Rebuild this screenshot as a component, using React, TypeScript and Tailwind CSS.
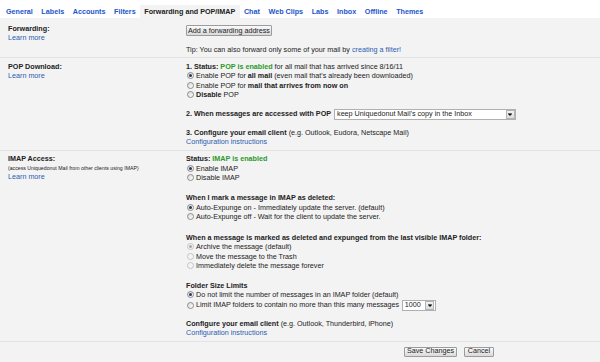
import React from "react";

const Radio = ({ checked = false, disabled = false }: { checked?: boolean; disabled?: boolean }) => (
  <span
    className={
      "ml-[1px] mr-[2px] inline-flex h-[7px] w-[7px] shrink-0 items-center justify-center rounded-full border " +
      (disabled
        ? "border-[#c4c4c4] bg-[#f4f4f4]"
        : "border-[#8c8c8c] bg-gradient-to-br from-[#d8d8d8] to-[#ffffff]")
    }
  >
    {checked && (
      <span
        className={
          "h-[3px] w-[3px] rounded-full " + (disabled ? "bg-[#a8a8a8]" : "bg-[#27385a]")
        }
      />
    )}
  </span>
);

const RadioRow = ({
  checked,
  disabled,
  children,
}: {
  checked?: boolean;
  disabled?: boolean;
  children: React.ReactNode;
}) => (
  <div className="flex h-[9.5px] items-center">
    <Radio checked={checked} disabled={disabled} />
    <span className="whitespace-nowrap">{children}</span>
  </div>
);

const DropArrow = () => (
  <span className="ml-auto flex h-[9px] w-[9px] items-center justify-center border border-[#b4b4b4] bg-gradient-to-b from-[#f2f2f2] to-[#dcdcdc]">
    <svg width="4" height="3" viewBox="0 0 4 3">
      <rect x="0" y="0" width="4" height="0.7" fill="#333" />
      <polygon points="0,1 4,1 2,3" fill="#111" />
    </svg>
  </span>
);

const Select = ({ text, w }: { text: string; w: string }) => (
  <span
    className={
      "flex h-[11px] items-center border border-[#b0b0b0] bg-white pl-[2px] pr-[0.5px] " + w
    }
  >
    <span className="whitespace-nowrap text-[#222]">{text}</span>
    <DropArrow />
  </span>
);

const Btn = ({ children, w, h }: { children: React.ReactNode; w: string; h: string }) => (
  <span
    className={
      "flex items-center justify-center rounded-[1px] border border-[#9c9c9c] bg-gradient-to-b from-[#fafafa] to-[#dadada] text-[#222] whitespace-nowrap " +
      w +
      " " +
      h
    }
  >
    {children}
  </span>
);

const tabs = [
  "General",
  "Labels",
  "Accounts",
  "Filters",
  "Forwarding and POP/IMAP",
  "Chat",
  "Web Clips",
  "Labs",
  "Inbox",
  "Offline",
  "Themes",
];

const Link = ({ children }: { children: React.ReactNode }) => (
  <span className="text-[#2a5db0]">{children}</span>
);

export default function App() {
  return (
    <div
      className="h-[362px] w-[600px] overflow-hidden bg-[#f3f3f3] text-[7.2px] text-[#222]"
      style={{ fontFamily: '"Liberation Sans", Arial, sans-serif' }}
    >
      {/* Tabs */}
      <div className="flex h-[18px] items-end bg-white pl-[1.7px]">
        {tabs.map((t) => (
          <span
            key={t}
            className={
              "h-[13px] whitespace-nowrap px-[4.3px] pt-[1px] font-bold leading-[12px] " +
              (t === "Forwarding and POP/IMAP" ? "bg-[#f3f3f3] text-[#222]" : "text-[#2255cc]")
            }
          >
            {t}
          </span>
        ))}
      </div>

      {/* Forwarding */}
      <div className="flex border-b border-[#e3e3e3] pb-[2px] pt-[6px]">
        <div className="w-[186px] shrink-0 pl-[8px] leading-[9px]">
          <div className="font-bold">Forwarding:</div>
          <Link>Learn more</Link>
        </div>
        <div className="flex flex-col items-start pt-[1px] leading-[9.5px]">
          <Btn w="w-[86px]" h="h-[11px]">Add a forwarding address</Btn>
          <div className="mt-[9px] whitespace-nowrap">
            Tip: You can also forward only some of your mail by <Link>creating a filter!</Link>
          </div>
        </div>
      </div>

      {/* POP */}
      <div className="flex border-b border-[#e3e3e3] pb-[3.5px] pt-[4px]">
        <div className="w-[186px] shrink-0 pl-[8px] leading-[9px]">
          <div className="font-bold">POP Download:</div>
          <Link>Learn more</Link>
        </div>
        <div className="leading-[9.5px]">
          <div className="whitespace-nowrap">
            <b>1. Status: </b>
            <b className="text-[#2a9a2a]">POP is enabled</b> for all mail that has arrived since 8/16/11
          </div>
          <RadioRow checked>
            Enable POP for <b>all mail</b> (even mail that's already been downloaded)
          </RadioRow>
          <RadioRow>
            Enable POP for <b>mail that arrives from now on</b>
          </RadioRow>
          <RadioRow>
            <b>Disable</b> POP
          </RadioRow>
          <div className="mt-[9px] flex h-[11px] items-center">
            <b className="mr-[3px] whitespace-nowrap">2. When messages are accessed with POP</b>
            <Select text="keep Uniquedonut Mail's copy in the Inbox" w="w-[182px]" />
          </div>
          <div className="mt-[9.5px] whitespace-nowrap leading-[8.5px]">
            <b>3. Configure your email client</b> (e.g. Outlook, Eudora, Netscape Mail)
          </div>
          <div className="leading-[8.5px]">
            <Link>Configuration instructions</Link>
          </div>
        </div>
      </div>

      {/* IMAP */}
      <div className="flex border-b border-[#e3e3e3] pb-[4px] pt-[3.5px]">
        <div className="w-[186px] shrink-0 pl-[8px]">
          <div className="font-bold leading-[9.5px]">IMAP Access:</div>
          <div className="whitespace-nowrap text-[5.2px] leading-[9px]">
            (access Uniquedonut Mail from other clients using IMAP)
          </div>
          <div className="leading-[8px]">
            <Link>Learn more</Link>
          </div>
        </div>
        <div className="leading-[9.5px]">
          <div className="whitespace-nowrap">
            <b>Status: </b>
            <b className="text-[#2a9a2a]">IMAP is enabled</b>
          </div>
          <RadioRow checked>Enable IMAP</RadioRow>
          <RadioRow>Disable IMAP</RadioRow>

          <div className="mt-[10.5px] whitespace-nowrap font-bold">
            When I mark a message in IMAP as deleted:
          </div>
          <RadioRow checked>Auto-Expunge on - Immediately update the server. (default)</RadioRow>
          <RadioRow>Auto-Expunge off - Wait for the client to update the server.</RadioRow>

          <div className="mt-[11px] whitespace-nowrap font-bold">
            When a message is marked as deleted and expunged from the last visible IMAP folder:
          </div>
          <RadioRow checked disabled>
            Archive the message (default)
          </RadioRow>
          <RadioRow disabled>Move the message to the Trash</RadioRow>
          <RadioRow disabled>Immediately delete the message forever</RadioRow>

          <div className="mt-[10px] whitespace-nowrap font-bold">Folder Size Limits</div>
          <RadioRow checked>Do not limit the number of messages in an IMAP folder (default)</RadioRow>
          <div className="flex h-[11px] items-center">
            <Radio />
            <span className="mr-[2.5px] whitespace-nowrap">
              Limit IMAP folders to contain no more than this many messages
            </span>
            <Select text="1000" w="w-[34px]" />
          </div>

          <div className="mt-[8.5px] whitespace-nowrap">
            <b>Configure your email client</b> (e.g. Outlook, Thunderbird, iPhone)
          </div>
          <div className="leading-[8.5px]">
            <Link>Configuration instructions</Link>
          </div>
        </div>
      </div>

      {/* Footer */}
      <div className="flex gap-[7px] pl-[404px] pt-[4.5px]">
        <Btn w="w-[53px]" h="h-[10.5px]">Save Changes</Btn>
        <Btn w="w-[30px]" h="h-[10.5px]">Cancel</Btn>
      </div>
    </div>
  );
}
